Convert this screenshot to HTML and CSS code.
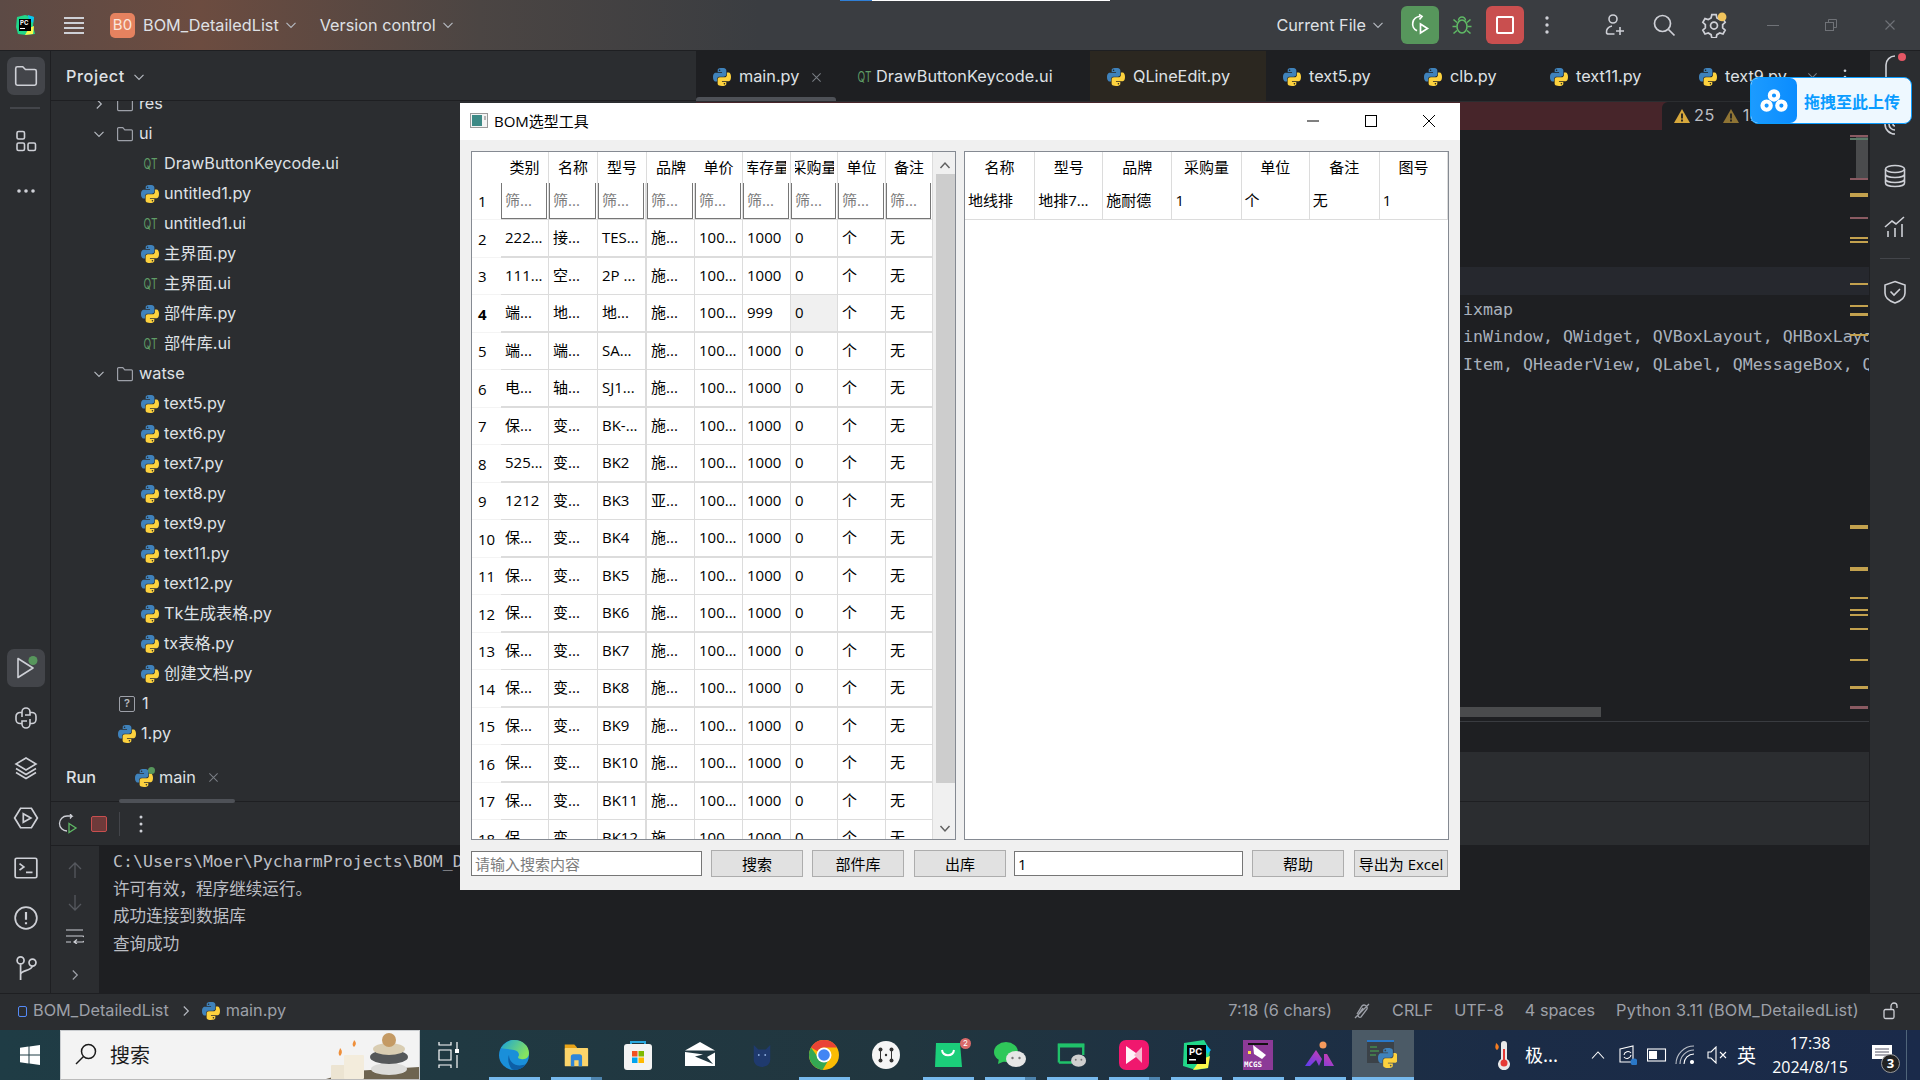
FILE: index.html
```html
<!DOCTYPE html>
<html lang="zh">
<head>
<meta charset="utf-8">
<title>BOM选型工具</title>
<link rel="stylesheet" href="styles.css">
</head>
<body>
<svg class="defs" width="0" height="0" aria-hidden="true">
  <symbol id="py" viewBox="0 0 110 110">
    <path fill="#3f82bb" d="M54.9 0C27 0 28.7 12 28.7 12v12.5h26.6v3.8H18S0 26.2 0 54.6s15.6 27.4 15.6 27.4h9.3V68.8s-.5-15.6 15.4-15.6h26.5s14.9.2 14.9-14.4V14.6S83.9 0 54.9 0zM40.2 8.5a4.8 4.8 0 1 1 0 9.6 4.8 4.8 0 0 1 0-9.6z"/>
    <path fill="#fdd23e" transform="rotate(180 55 55)" d="M54.9 0C27 0 28.7 12 28.7 12v12.5h26.6v3.8H18S0 26.2 0 54.6s15.6 27.4 15.6 27.4h9.3V68.8s-.5-15.6 15.4-15.6h26.5s14.9.2 14.9-14.4V14.6S83.9 0 54.9 0zM40.2 8.5a4.8 4.8 0 1 1 0 9.6 4.8 4.8 0 0 1 0-9.6z"/>
  </symbol>
  <symbol id="folder" viewBox="0 0 18 18">
    <path fill="none" stroke="currentColor" stroke-width="1.2" d="M1.6 3.6a1 1 0 0 1 1-1h4.2l2 2.2h6.6a1 1 0 0 1 1 1v8.8a1 1 0 0 1-1 1h-12.800a1 1 0 0 1-1-1z"/>
  </symbol>
  <symbol id="down" viewBox="0 0 12 12"><path fill="none" stroke="currentColor" stroke-width="1.2" d="M1.500 3.800 6 8.300l4.500-4.500"/></symbol>
  <symbol id="right" viewBox="0 0 12 12"><path fill="none" stroke="currentColor" stroke-width="1.2" d="M3.800 1.500 8.300 6l-4.500 4.500"/></symbol>
  <symbol id="x" viewBox="0 0 12 12"><path fill="none" stroke="currentColor" stroke-width="1.100" d="M1.500 1.500l9 9m0-9l-9 9"/></symbol>
</svg>

<div class="edge-top"></div>

<header class="titlebar">
  <svg class="pc-logo" viewBox="0 0 22 22" width="22" height="22"><path fill="#21d789" d="M3 3l8-2 9 2-1 9 2 8-9 1-8-1-2-7z"/><path fill="#fcf84a" d="M11 21l8-1 1-8-5 2z"/><path fill="#07c3f2" d="M14 1l6 2-1 6-4-3z"/><rect x="5" y="5" width="12" height="12" fill="#000"/><text x="6" y="11" class="pc-txt">PC</text><rect x="6" y="14" width="5" height="1" fill="#fff"/></svg>
  <svg class="hamb" viewBox="0 0 20 18" width="20" height="18"><path stroke="#ced0d6" stroke-width="2" d="M0 2h20M0 7h20M0 12h20M0 17h20"/></svg>
  <span class="badge">B0</span>
  <span class="tb-txt">BOM_DetailedList</span>
  <svg class="chev" width="12" height="12"><use href="#down"/></svg>
  <span class="tb-txt vc">Version control</span>
  <svg class="chev" width="12" height="12"><use href="#down"/></svg>
  <div class="tb-right">
    <span class="tb-txt cf">Current File</span>
    <svg class="chev" width="12" height="12"><use href="#down"/></svg>
    <span class="btn-run"><svg viewBox="0 0 24 24" width="24" height="24" fill="none" stroke="#fff" stroke-width="1.700"><path d="M12 3.500a7.500 7.500 0 0 0-3 14.300"/><path d="M11 1.500l3 2-2.500 3"/><path d="M12.500 11l7 4.500-7 4.500z"/></svg></span>
    <svg class="bug" viewBox="0 0 24 24" width="24" height="24" fill="none" stroke="#5fb865" stroke-width="1.600"><ellipse cx="12" cy="13.500" rx="5" ry="6.500"/><path d="M8.500 7.500a3.500 3.500 0 0 1 7 0M2.500 13.500h4M17.500 13.500h4M3.500 6.500l3.500 3M20.500 6.500l-3.500 3M3.500 20.500l3.500-3M20.500 20.500l-3.500-3"/></svg>
    <span class="btn-stop"><i></i></span>
    <svg class="vdots" viewBox="0 0 4 18" width="4" height="18"><circle cx="2" cy="2" r="1.700" fill="#ced0d6"/><circle cx="2" cy="9" r="1.700" fill="#ced0d6"/><circle cx="2" cy="16" r="1.700" fill="#ced0d6"/></svg>
    <svg class="ti ti-user" viewBox="0 0 24 24" width="24" height="24" fill="none" stroke="#ced0d6" stroke-width="1.600"><circle cx="11" cy="6" r="4"/><path d="M10 13c-4 .5-6 4-5.500 6.500 0 1 1 1.500 2 1.500h6M18 14v8M14 18h8"/></svg>
    <svg class="ti ti-search" viewBox="0 0 24 24" width="24" height="24" fill="none" stroke="#ced0d6" stroke-width="1.700"><circle cx="10.500" cy="10.500" r="8"/><path d="M16.500 16.500l6 6"/></svg>
    <svg class="ti ti-gear" viewBox="0 0 24 24" width="26" height="26" fill="none" stroke="#ced0d6" stroke-width="1.600"><path d="M10 2.500h4l.7 3 2.600 1.500 3-.9 2 3.500-2.300 2.100v3l2.300 2.100-2 3.500-3-.9-2.600 1.500-.7 3h-4l-.7-3-2.600-1.500-3 .9-2-3.500 2.300-2.100v-3L1.700 9.600l2-3.500 3 .9 2.600-1.500z"/><circle cx="12" cy="12.500" r="3.200"/><circle cx="19.500" cy="4.500" r="4" fill="#f2c55c" stroke="none"/></svg>
    <span class="wc wc-min"></span>
    <svg class="wc-max" viewBox="0 0 14 14" width="14" height="14" fill="none" stroke="#6f7277"><rect x="1.500" y="4.500" width="8" height="8"/><path d="M4.500 4.500v-3h8v8h-3"/></svg>
    <svg class="wc-x" width="12" height="12"><use href="#x"/></svg>
  </div>
</header>

<main class="ide">
  <nav class="stripe stripe-l">
    <span class="si act si-first"><svg viewBox="0 0 24 24" width="26" height="26" fill="none" stroke="#ced0d6" stroke-width="1.500"><path d="M2.500 5a1.500 1.500 0 0 1 1.500-1.500h5l2.500 2.500H20A1.500 1.500 0 0 1 21.500 7.500V19A1.500 1.500 0 0 1 20 20.500H4A1.500 1.500 0 0 1 2.500 19z"/></svg></span>
    <i class="sep"></i>
    <span class="si"><svg viewBox="0 0 24 24" width="24" height="24" fill="none" stroke="#ced0d6" stroke-width="1.600"><rect x="3" y="2.500" width="7.500" height="7.500" rx="1.500"/><rect x="3" y="14" width="7.500" height="7.500" rx="1.500"/><rect x="14" y="14" width="7.500" height="7.500" rx="1.500"/></svg></span>
    <span class="si si-g"><svg viewBox="0 0 24 8" width="24" height="8"><circle cx="5" cy="4" r="1.800" fill="#ced0d6"/><circle cx="12" cy="4" r="1.800" fill="#ced0d6"/><circle cx="19" cy="4" r="1.800" fill="#ced0d6"/></svg></span>
    <span class="grow"></span>
    <span class="si act"><svg viewBox="0 0 26 26" width="26" height="26" fill="none" stroke="#ced0d6" stroke-width="1.600"><path d="M5 3.500l15 9.500-15 9.500z" stroke-linejoin="round"/><circle cx="20" cy="5.500" r="4.500" fill="#57965c" stroke="none"/></svg></span>
    <span class="si si-g"><svg viewBox="0 0 24 24" width="24" height="24" fill="none" stroke="#ced0d6" stroke-width="1.600"><path d="M8 11V6a4 4 0 0 1 4-4 4 4 0 0 1 4 4v3h-5M16 13v5a4 4 0 0 1-4 4 4 4 0 0 1-4-4v-3h5"/><path d="M8 6.500H6a4 4 0 0 0-4 4v3a4 4 0 0 0 4 4h2M16 17.500h2a4 4 0 0 0 4-4v-3a4 4 0 0 0-4-4h-2"/></svg></span>
    <span class="si si-g"><svg viewBox="0 0 24 24" width="24" height="24" fill="none" stroke="#ced0d6" stroke-width="1.600"><path d="M12 2l10 6-10 6L2 8zM2 12.500l10 6 10-6M2 16.500l10 6 10-6"/></svg></span>
    <span class="si si-g"><svg viewBox="0 0 24 24" width="26" height="26" fill="none" stroke="#ced0d6" stroke-width="1.600"><path d="M7 3h10l5.500 9-5.500 9H7l-5.500-9z"/><path d="M9.500 8l7 4-7 4z"/></svg></span>
    <span class="si si-g"><svg viewBox="0 0 24 24" width="26" height="26" fill="none" stroke="#ced0d6" stroke-width="1.600"><rect x="2" y="3" width="20" height="18" rx="1.500"/><path d="M6 8l4 3-4 3M12 16h6"/></svg></span>
    <span class="si si-g"><svg viewBox="0 0 24 24" width="26" height="26" fill="none" stroke="#ced0d6" stroke-width="1.600"><circle cx="12" cy="12" r="10"/><path d="M12 6.500v7M12 16v1.800" stroke-width="2"/></svg></span>
    <span class="si si-g si-last"><svg viewBox="0 0 24 24" width="26" height="26" fill="none" stroke="#ced0d6" stroke-width="1.600"><circle cx="7" cy="5" r="3.200"/><circle cx="18" cy="7" r="3.200"/><path d="M7 8.500V23M7 18c0-4 10-3 11-8"/></svg></span>
  </nav>

  <div class="center">
    <div class="top">
      <section class="project">
        <div class="proj-head"><span class="proj-title">Project</span><svg class="chev" width="12" height="12"><use href="#down"/></svg></div>
        <div class="tree">
          <div class="row lv1"><svg class="tw" width="12" height="12"><use href="#right"/></svg><svg class="fd" width="18" height="18"><use href="#folder"/></svg><span>res</span></div>
          <div class="row lv1"><svg class="tw" width="12" height="12"><use href="#down"/></svg><svg class="fd" width="18" height="18"><use href="#folder"/></svg><span>ui</span></div>
          <div class="row lv2"><span class="qt">QT</span><span>DrawButtonKeycode.ui</span></div>
          <div class="row lv2"><svg class="pi" width="18" height="18"><use href="#py"/></svg><span>untitled1.py</span></div>
          <div class="row lv2"><span class="qt">QT</span><span>untitled1.ui</span></div>
          <div class="row lv2"><svg class="pi" width="18" height="18"><use href="#py"/></svg><span>主界面.py</span></div>
          <div class="row lv2"><span class="qt">QT</span><span>主界面.ui</span></div>
          <div class="row lv2"><svg class="pi" width="18" height="18"><use href="#py"/></svg><span>部件库.py</span></div>
          <div class="row lv2"><span class="qt">QT</span><span>部件库.ui</span></div>
          <div class="row lv1"><svg class="tw" width="12" height="12"><use href="#down"/></svg><svg class="fd" width="18" height="18"><use href="#folder"/></svg><span>watse</span></div>
          <div class="row lv2"><svg class="pi" width="18" height="18"><use href="#py"/></svg><span>text5.py</span></div>
          <div class="row lv2"><svg class="pi" width="18" height="18"><use href="#py"/></svg><span>text6.py</span></div>
          <div class="row lv2"><svg class="pi" width="18" height="18"><use href="#py"/></svg><span>text7.py</span></div>
          <div class="row lv2"><svg class="pi" width="18" height="18"><use href="#py"/></svg><span>text8.py</span></div>
          <div class="row lv2"><svg class="pi" width="18" height="18"><use href="#py"/></svg><span>text9.py</span></div>
          <div class="row lv2"><svg class="pi" width="18" height="18"><use href="#py"/></svg><span>text11.py</span></div>
          <div class="row lv2"><svg class="pi" width="18" height="18"><use href="#py"/></svg><span>text12.py</span></div>
          <div class="row lv2"><svg class="pi" width="18" height="18"><use href="#py"/></svg><span>Tk生成表格.py</span></div>
          <div class="row lv2"><svg class="pi" width="18" height="18"><use href="#py"/></svg><span>tx表格.py</span></div>
          <div class="row lv2"><svg class="pi" width="18" height="18"><use href="#py"/></svg><span>创建文档.py</span></div>
          <div class="row lv1f"><span class="unk">?</span><span>1</span></div>
          <div class="row lv1f"><svg class="pi" width="18" height="18"><use href="#py"/></svg><span>1.py</span></div>
        </div>
      </section>

      <section class="editor">
        <div class="tabs">
          <div class="tab t1"><svg width="18" height="18"><use href="#py"/></svg><span>main.py</span><svg class="tx" width="11" height="11"><use href="#x"/></svg></div>
          <div class="tab t2"><span class="qt">QT</span><span>DrawButtonKeycode.ui</span></div>
          <div class="tab t3"><svg width="18" height="18"><use href="#py"/></svg><span>QLineEdit.py</span></div>
          <div class="tab t4"><svg width="18" height="18"><use href="#py"/></svg><span>text5.py</span></div>
          <div class="tab t5"><svg width="18" height="18"><use href="#py"/></svg><span>clb.py</span></div>
          <div class="tab t6"><svg width="18" height="18"><use href="#py"/></svg><span>text11.py</span></div>
          <div class="tab t7"><svg width="18" height="18"><use href="#py"/></svg><span>text9.py</span><svg class="tx tx9" width="11" height="11"><use href="#x"/></svg><svg class="vd9" viewBox="0 0 4 18" width="4" height="16"><circle cx="2" cy="2" r="1.500" fill="#ced0d6"/><circle cx="2" cy="9" r="1.500" fill="#ced0d6"/><circle cx="2" cy="16" r="1.500" fill="#ced0d6"/></svg></div>
        </div>
        <div class="banner">
          <div class="insp">
            <svg class="warn" viewBox="0 0 16 14" width="16" height="14"><path fill="#d7a83c" d="M8 0l8 14H0z"/><path stroke="#1e1f22" stroke-width="1.800" d="M8 4.500v5M8 10.500v2"/></svg><span>25</span>
            <svg class="warn w2" viewBox="0 0 16 14" width="16" height="14"><path fill="#8f7434" d="M8 0l8 14H0z"/><path stroke="#1e1f22" stroke-width="1.800" d="M8 4.500v5M8 10.500v2"/></svg><span>123</span>
          </div>
        </div>
        <div class="code">
          <div class="caret"></div>
          <div class="line">ixmap</div>
          <div class="line">inWindow, QWidget, QVBoxLayout, QHBoxLayo</div>
          <div class="line">Item, QHeaderView, QLabel, QMessageBox, Q</div>
        </div>
        <div class="hbar"><i></i></div>
        <div class="foot"></div>
        <svg class="marks" viewBox="0 0 18 701" width="18" height="701">
          <rect x="6" y="84" width="12" height="43" fill="#4a4b4d"/>
          <g fill="#8a5a62"><rect y="84" width="18" height="2"/><rect y="127" width="18" height="2"/><rect y="166" width="18" height="2"/><rect y="655" width="18" height="3"/></g>
          <rect y="87" width="18" height="2" fill="#5b7a68"/>
          <g fill="#c3a14e"><rect y="142" width="18" height="4"/><rect y="186" width="18" height="2"/><rect y="190" width="18" height="2"/><rect y="232" width="18" height="2"/><rect y="254" width="18" height="2"/><rect y="262" width="18" height="3"/><rect y="283" width="18" height="2"/><rect y="474" width="18" height="4"/><rect y="516" width="18" height="4"/><rect y="546" width="18" height="2"/><rect y="558" width="18" height="2"/><rect y="563" width="18" height="2"/><rect y="577" width="18" height="2"/><rect y="608" width="18" height="2"/><rect y="635" width="18" height="3"/></g>
        </svg>
      </section>
    </div>

    <section class="run">
      <div class="run-tabs">
        <span class="run-title">Run</span>
        <span class="run-tab"><span class="py-dot"><svg width="18" height="18"><use href="#py"/></svg></span><span>main</span><svg class="tx" width="11" height="11"><use href="#x"/></svg></span>
      </div>
      <div class="run-tools">
        <svg viewBox="0 0 20 20" width="20" height="20" fill="none" stroke="#ced0d6" stroke-width="1.300"><path d="M9 2a7.500 7.500 0 0 0 0 15"/><path d="M9 2h5l-2-2M14 2l-2 2.500"/><path d="M11 9.500l7 4.500-7 4.500z" stroke="#5fb865"/></svg>
        <span class="stop"></span>
        <i class="tsep"></i>
        <svg class="tdots" viewBox="0 0 4 18" width="4" height="18"><circle cx="2" cy="2" r="1.500" fill="#ced0d6"/><circle cx="2" cy="9" r="1.500" fill="#ced0d6"/><circle cx="2" cy="16" r="1.500" fill="#ced0d6"/></svg>
      </div>
      <div class="run-body">
        <div class="gutter">
          <svg viewBox="0 0 14 16" width="14" height="16" fill="none" stroke="#55585e" stroke-width="1.300"><path d="M7 16V1M1 7l6-6 6 6"/></svg>
          <svg viewBox="0 0 14 16" width="14" height="16" fill="none" stroke="#55585e" stroke-width="1.300"><path d="M7 0v15M1 9l6 6 6-6"/></svg>
          <svg viewBox="0 0 18 16" width="18" height="16" fill="none" stroke="#ced0d6" stroke-width="1.200"><path d="M0 2h17M0 8h16a2.500 2.500 0 0 1 0 6H8M11 11.500L8 14l3 2M0 14h5"/></svg>
          <svg class="gut-chev" width="12" height="12"><use href="#right"/></svg>
        </div>
        <div class="console">
          <div>C:\Users\Moer\PycharmProjects\BOM_D</div>
          <div>许可有效，程序继续运行。</div>
          <div>成功连接到数据库</div>
          <div>查询成功</div>
        </div>
      </div>
    </section>
  </div>

  <nav class="stripe stripe-r">
    <span class="ri ri-bell"><svg viewBox="0 0 26 26" width="26" height="26" fill="none" stroke="#ced0d6" stroke-width="1.600"><path d="M4 24V12a9 9 0 0 1 9-9"/><circle cx="20" cy="4" r="4" fill="#e55765" stroke="none"/></svg></span>
    <span class="ri ri-spiral"><svg viewBox="0 0 24 24" width="24" height="24" fill="none" stroke="#ced0d6" stroke-width="1.600"><path d="M12 13a2 2 0 1 1 2-2M12 17a6 6 0 1 1 6-6M12 21a10 10 0 1 1 10-10"/></svg></span>
    <span class="ri"><svg viewBox="0 0 24 24" width="24" height="24" fill="none" stroke="#ced0d6" stroke-width="1.600"><ellipse cx="12" cy="5" rx="9.500" ry="3.500"/><path d="M2.500 5v14c0 2 4 3.500 9.500 3.500s9.500-1.500 9.500-3.500V5M2.500 10c0 2 4 3.500 9.500 3.500s9.500-1.500 9.500-3.500M2.500 15c0 2 4 3.500 9.500 3.500s9.500-1.500 9.500-3.500"/></svg></span>
    <span class="ri"><svg viewBox="0 0 24 24" width="24" height="24" fill="none" stroke="#ced0d6" stroke-width="1.600"><path d="M2 12L9 6l4 3 8-7M5 22v-6M12 22v-9M19 22V9"/></svg></span>
    <i class="sep-r"></i>
    <span class="ri"><svg viewBox="0 0 24 24" width="24" height="24" fill="none" stroke="#ced0d6" stroke-width="1.600"><path d="M12 1.500l10 3.500v8c0 5-4 8-10 10C6 21 2 18 2 13V5z"/><path d="M7.500 11.500l3.500 3.500 6-6"/></svg></span>
  </nav>
</main>

<footer class="status">
  <i class="mod"></i><span>BOM_DetailedList</span>
  <svg class="st-chev" width="12" height="12"><use href="#right"/></svg>
  <svg class="st-py" width="18" height="18"><use href="#py"/></svg><span>main.py</span>
  <div class="st-right">
    <span>7:18 (6 chars)</span>
    <svg class="st-nopen" viewBox="0 0 18 18" width="18" height="18" fill="none" stroke="#9da0a8" stroke-width="1.300"><path d="M4 12l5-8a3 3 0 0 1 5 3l-6 8a2 2 0 0 1-3-2l5-7M2 16L16 2"/></svg>
    <span>CRLF</span><span>UTF-8</span><span>4 spaces</span><span class="st-py-ver">Python 3.11 (BOM_DetailedList)</span>
    <svg class="st-lock" viewBox="0 0 18 18" width="18" height="18" fill="none" stroke="#ced0d6" stroke-width="1.300"><rect x="2" y="7.500" width="10" height="9" rx="1.500"/><path d="M9 7.500V4a3 3 0 0 1 6 0v2"/></svg>
  </div>
</footer>

<div class="taskbar">
  <div class="start"><svg viewBox="0 0 20 20" width="20" height="20" fill="#fff"><path d="M0 2.800l8.500-1.200v7.900H0zM9.500 1.400L20 0v9.500H9.500zM0 10.500h8.500v7.900L0 17.200zM9.500 10.500H20V20L9.500 18.600z"/></svg></div>
  <div class="search">
    <svg viewBox="0 0 22 22" width="22" height="22" fill="none" stroke="#1a1a1a" stroke-width="1.500"><circle cx="13.500" cy="8.500" r="7"/><path d="M8.500 13.500L1 21"/></svg>
    <span>搜索</span>
    <svg class="stones" viewBox="0 0 120 50" width="120" height="50">
      <path fill="#6e6450" d="M20 50l35-10 65-4v14z"/>
      <rect x="32" y="34" width="20" height="15" rx="1" fill="#ece4d2"/>
      <rect x="45" y="24" width="20" height="24" rx="1" fill="#f3ecdc"/>
      <path fill="#ef8f3a" d="M41 25c-3-3 0-6 0-8 2 2 3 5 0 8zM55 16c-3-3 0-5 0-7 2 2 3 4 0 7z"/>
      <ellipse cx="90" cy="38" rx="18" ry="6" fill="#dcdcda"/>
      <ellipse cx="90" cy="26" rx="19" ry="7" fill="#55585a"/>
      <ellipse cx="90" cy="18" rx="16" ry="6" fill="#d9cdb2"/>
      <ellipse cx="90" cy="9" rx="7" ry="7" fill="#c49a64"/>
    </svg>
  </div>
  <div class="tv"><svg viewBox="0 0 24 26" width="24" height="26" fill="none" stroke="#fff" stroke-width="1.200"><path d="M1 0v3h12V0M1 8h12v10H1zM1 26v-3h12v3M19 0v7M19 13v13"/><rect x="17" y="7" width="4" height="4" fill="#fff" stroke="none"/></svg></div>
  <div class="ti-app on"><svg viewBox="0 0 30 30" width="30" height="30"><defs><linearGradient id="eg" x1="0" y1="0" x2="1" y2="0.500"><stop offset="0" stop-color="#1aa3d8"/><stop offset="1" stop-color="#86e35f"/></linearGradient></defs><circle cx="15" cy="15" r="15" fill="#1a8fd9"/><path fill="url(#eg)" d="M2 8C6 2 11 0 15 0c9 0 15 6 15 13 0 4-3 7-8 6-2 0-3-1-3-2 2-2 1-6-4-7C10 9 5 9 2 8z"/><path fill="#0d5fa6" d="M10 15c0 8 8 13 17 9-3 4-7 6-12 6-2 0-4-3-5-6s-1-7 0-9z"/></svg></div>
  <div class="ti-app on two"><svg viewBox="0 0 30 30" width="30" height="26"><path fill="#e8a317" d="M2 3h11l3 3v3H2z"/><rect x="2" y="7" width="27" height="21" rx="1" fill="#fbd46a"/><path fill="#2f86d8" d="M9 28V17a3 3 0 0 1 3-3h7a3 3 0 0 1 3 3v11h-4v-7h-5v7z"/></svg></div>
  <div class="ti-app"><svg viewBox="0 0 30 30" width="30" height="30"><path fill="none" stroke="#2aa9e0" stroke-width="2" d="M8 7V2h14v5"/><rect x="1" y="4" width="28" height="26" rx="3" fill="#f3f3f3"/><rect x="9" y="11" width="5.500" height="5.500" fill="#f25022"/><rect x="15.500" y="11" width="5.500" height="5.500" fill="#7fba00"/><rect x="9" y="17.500" width="5.500" height="5.500" fill="#00a4ef"/><rect x="15.500" y="17.500" width="5.500" height="5.500" fill="#ffb900"/></svg></div>
  <div class="ti-app"><svg viewBox="0 0 30 26" width="30" height="26"><path fill="#fff" d="M15 0l15 8.500H0zM0 10l15 2 3 .5-8 2 18 7.500L22 15l8-4.500V24H0z"/></svg></div>
  <div class="ti-app"><svg viewBox="0 0 24 26" width="22" height="24"><path fill="#1f3a6e" d="M3 2l5 5h8l5-5v16c0 5-4 8-9 8s-9-3-9-8z"/><circle cx="8.500" cy="13" r="1" fill="#8fb0e0"/><circle cx="15.500" cy="13" r="1" fill="#8fb0e0"/></svg></div>
  <div class="ti-app on"><svg viewBox="0 0 30 30" width="30" height="30"><circle cx="15" cy="15" r="15" fill="#fbbc04"/><path fill="#ea4335" d="M2 7.500A15 15 0 0 1 28 7.500H15a7.500 7.500 0 0 0-6.500 3.750z"/><path fill="#34a853" d="M2 7.500A15 15 0 0 0 13.500 29.900L19.500 20H11z"/><circle cx="15" cy="15" r="7.500" fill="#fff"/><circle cx="15" cy="15" r="5.800" fill="#4285f4"/></svg></div>
  <div class="ti-app"><svg viewBox="0 0 28 28" width="28" height="28"><circle cx="14" cy="14" r="14" fill="#f5f5f5"/><g fill="#333"><circle cx="8.500" cy="8.500" r="2"/><circle cx="19.500" cy="8.500" r="2"/><circle cx="8.500" cy="19.500" r="2"/><circle cx="19.500" cy="19.500" r="2"/><path d="M8 9h1v10H8zM19 9h1v10h-1z"/><circle cx="14" cy="14" r="1.200"/></g></svg></div>
  <div class="ti-app on"><span class="numbadge">2</span><svg viewBox="0 0 30 30" width="30" height="30"><path fill="#1bce7a" d="M3 3h24l2 24H2z"/><path fill="none" stroke="#fff" stroke-width="2" d="M9 10c1 7 11 7 12 0"/></svg></div>
  <div class="ti-app on two"><svg viewBox="0 0 32 30" width="32" height="30"><ellipse cx="12" cy="12" rx="12" ry="10" fill="#2fc85a"/><path fill="#2fc85a" d="M5 18l-1 6 7-3z"/><ellipse cx="22" cy="19" rx="10" ry="8" fill="#e6e6e6"/><circle cx="18.500" cy="18" r="1.200" fill="#777"/><circle cx="25.500" cy="18" r="1.200" fill="#777"/></svg></div>
  <div class="ti-app on"><svg viewBox="0 0 32 26" width="30" height="26"><path fill="none" stroke="#20c26a" stroke-width="2.500" d="M2 21V2h26v11M2 21h14"/><rect x="1" y="1" width="28" height="4" fill="#20c26a"/><ellipse cx="23" cy="19" rx="8" ry="6.500" fill="#cfcfcf"/><circle cx="20" cy="18" r="1" fill="#777"/><circle cx="26" cy="18" r="1" fill="#777"/></svg></div>
  <div class="ti-app on two"><svg viewBox="0 0 30 30" width="30" height="30"><rect width="30" height="30" rx="7" fill="#f0186e"/><path fill="#fff" d="M7 6l10 7 6 2-6 2-10 7z" opacity=".95"/><path fill="#f6b5cd" d="M23 7v16l-8-8z"/></svg></div>
  <div class="ti-app on"><svg viewBox="0 0 30 30" width="30" height="30"><path fill="#21d789" d="M3 3l20-3 6 10-2 18-12 2-13-4z"/><path fill="#fcf84a" d="M12 30l15-2 2-12-10 4z"/><path fill="#07c3f2" d="M24 4l6 6-4 4z"/><rect x="6" y="5" width="19" height="19" fill="#000"/><text x="8" y="15" class="pc-big">PC</text><rect x="8" y="19" width="7" height="1.500" fill="#fff"/></svg></div>
  <div class="ti-app on"><svg viewBox="0 0 30 30" width="30" height="30"><rect width="30" height="30" fill="#8c3a97"/><path fill="#fff" d="M10 5l13 10-4 4-8-5z"/><path fill="#111" d="M5 3h20v2H5z"/><path fill="#ffe24a" d="M5 11h3v3H5z"/><text x="1" y="27" class="mcgs">MCGS</text></svg></div>
  <div class="ti-app on"><svg viewBox="0 0 30 30" width="30" height="30"><defs><linearGradient id="ag" x1="0" y1="1" x2="1" y2="0"><stop offset="0" stop-color="#5b3cf0"/><stop offset="1" stop-color="#e83fa0"/></linearGradient></defs><path fill="url(#ag)" d="M0 26L11 10l6 9-3 7-3-6-6 6zM19 14h3l7 12h-10z"/><circle cx="18" cy="5" r="3.500" fill="#f59a5c"/></svg></div>
  <div class="ti-app active"><svg viewBox="0 0 30 30" width="30" height="30"><rect y="1" width="27" height="23" fill="#3b4248"/><rect y="1" width="27" height="2" fill="#2a78c8"/><path stroke="#4caf50" d="M3 8h7M3 12h9M3 16h6"/><svg x="11" y="9" width="20" height="20"><use href="#py"/></svg></svg></div>
  <div class="tray">
    <svg class="th" viewBox="0 0 18 30" width="18" height="30"><path fill="#e9e9e9" d="M10 1a3 3 0 0 1 3 3v15a6 6 0 1 1-6 0V4a3 3 0 0 1 3-3z"/><circle cx="10" cy="23" r="3.500" fill="#e53935"/><rect x="9" y="9" width="2" height="13" fill="#e53935"/><path fill="#f57c20" d="M3 10C0 8 2 5 2 3c3 2 4 5 1 7z"/></svg>
    <span class="ji">极...</span>
    <svg class="caret-up" viewBox="0 0 14 8" width="14" height="8" fill="none" stroke="#fff" stroke-width="1.100"><path d="M1 7.500L7 1l6 6.500"/></svg>
    <svg class="tr1" viewBox="0 0 18 20" width="18" height="20" fill="none" stroke="#fff" stroke-width="1.100"><path d="M1 4l13-3v16H1zM5 10a4 4 0 0 1 7-2M12 10a4 4 0 0 1-7 2"/><circle cx="15" cy="17" r="3.500" fill="#2a78c8" stroke="none"/></svg>
    <svg class="tr2" viewBox="0 0 20 14" width="20" height="14" fill="none" stroke="#fff" stroke-width="1.100"><rect x=".5" y="1" width="18" height="12"/><rect x="2" y="3" width="8" height="8" fill="#fff" stroke="none"/></svg>
    <svg class="tr3" viewBox="0 0 20 20" width="20" height="20" fill="none" stroke="#fff" stroke-width="1.100"><path d="M1 19A18 18 0 0 1 19 1M5 19A14 14 0 0 1 19 5" opacity=".7"/><path d="M9 19A10 10 0 0 1 19 9"/><circle cx="17" cy="17" r="1.500" fill="#fff"/></svg>
    <svg class="tr4" viewBox="0 0 20 18" width="20" height="18" fill="none" stroke="#fff" stroke-width="1.100"><path d="M1 6h3l5-5v16l-5-5H1zM13 6l6 6m0-6l-6 6"/></svg>
    <span class="ying">英</span>
    <div class="clock"><span>17:38</span><span>2024/8/15</span></div>
    <div class="notif"><svg viewBox="0 0 20 20" width="20" height="20"><path fill="#fff" d="M0 0h20v14h-6l-4 5v-5H0z"/><path stroke="#556" d="M3 4h14M3 7h14M3 10h14"/></svg><span class="nb">3</span></div>
    <i class="desk"></i>
  </div>
</div>

<!-- Floating application window over the IDE -->
<section class="dialog">
  <div class="dlg-title">
    <svg viewBox="0 0 18 15" width="18" height="15"><rect x=".5" y=".5" width="17" height="14" fill="#f4f4f4" stroke="#9a9a9a"/><rect x="2" y="2" width="10" height="11" fill="#3d8a86"/><rect x="14.500" y="3" width="1" height="4" fill="#777"/></svg>
    <span>BOM选型工具</span>
    <div class="dlg-ctl">
      <svg viewBox="0 0 14 14" width="14" height="14"><path stroke="#000" d="M1 7h12"/></svg>
      <svg viewBox="0 0 14 14" width="14" height="14"><rect x="1.500" y="1.500" width="11" height="11" fill="none" stroke="#000"/></svg>
      <svg viewBox="0 0 14 14" width="14" height="14"><path stroke="#000" fill="none" d="M1 1l12 12m0-12L1 13"/></svg>
    </div>
  </div>
  <div class="dlg-body">
    <div class="panes">
      <div class="pane">
        <table class="grid g-left">
          <thead><tr><th></th><th>类别</th><th>名称</th><th>型号</th><th>品牌</th><th>单价</th><th><span class="clip">库存量</span></th><th><span class="clip">采购量</span></th><th>单位</th><th>备注</th></tr></thead>
          <tbody>
            <tr class="filt"><td class="rn">1</td><td><input placeholder="筛..."></td><td><input placeholder="筛..."></td><td><input placeholder="筛..."></td><td><input placeholder="筛..."></td><td><input placeholder="筛..."></td><td><input placeholder="筛..."></td><td><input placeholder="筛..."></td><td><input placeholder="筛..."></td><td><input placeholder="筛..."></td></tr>
            <tr><td class="rn">2</td><td>222...</td><td>接...</td><td>TES...</td><td>施...</td><td>100...</td><td>1000</td><td>0</td><td>个</td><td>无</td></tr>
            <tr><td class="rn">3</td><td>111...</td><td>空...</td><td>2P ...</td><td>施...</td><td>100...</td><td>1000</td><td>0</td><td>个</td><td>无</td></tr>
            <tr><td class="rn cur">4</td><td>端...</td><td>地...</td><td>地...</td><td>施...</td><td>100...</td><td>999</td><td class="sel">0</td><td>个</td><td>无</td></tr>
            <tr><td class="rn">5</td><td>端...</td><td>端...</td><td>SA...</td><td>施...</td><td>100...</td><td>1000</td><td>0</td><td>个</td><td>无</td></tr>
            <tr><td class="rn">6</td><td>电...</td><td>轴...</td><td>SJ1...</td><td>施...</td><td>100...</td><td>1000</td><td>0</td><td>个</td><td>无</td></tr>
            <tr><td class="rn">7</td><td>保...</td><td>变...</td><td>BK-...</td><td>施...</td><td>100...</td><td>1000</td><td>0</td><td>个</td><td>无</td></tr>
            <tr><td class="rn">8</td><td>525...</td><td>变...</td><td>BK2</td><td>施...</td><td>100...</td><td>1000</td><td>0</td><td>个</td><td>无</td></tr>
            <tr><td class="rn">9</td><td>1212</td><td>变...</td><td>BK3</td><td>亚...</td><td>100...</td><td>1000</td><td>0</td><td>个</td><td>无</td></tr>
            <tr><td class="rn">10</td><td>保...</td><td>变...</td><td>BK4</td><td>施...</td><td>100...</td><td>1000</td><td>0</td><td>个</td><td>无</td></tr>
            <tr><td class="rn">11</td><td>保...</td><td>变...</td><td>BK5</td><td>施...</td><td>100...</td><td>1000</td><td>0</td><td>个</td><td>无</td></tr>
            <tr><td class="rn">12</td><td>保...</td><td>变...</td><td>BK6</td><td>施...</td><td>100...</td><td>1000</td><td>0</td><td>个</td><td>无</td></tr>
            <tr><td class="rn">13</td><td>保...</td><td>变...</td><td>BK7</td><td>施...</td><td>100...</td><td>1000</td><td>0</td><td>个</td><td>无</td></tr>
            <tr><td class="rn">14</td><td>保...</td><td>变...</td><td>BK8</td><td>施...</td><td>100...</td><td>1000</td><td>0</td><td>个</td><td>无</td></tr>
            <tr><td class="rn">15</td><td>保...</td><td>变...</td><td>BK9</td><td>施...</td><td>100...</td><td>1000</td><td>0</td><td>个</td><td>无</td></tr>
            <tr><td class="rn">16</td><td>保...</td><td>变...</td><td>BK10</td><td>施...</td><td>100...</td><td>1000</td><td>0</td><td>个</td><td>无</td></tr>
            <tr><td class="rn">17</td><td>保...</td><td>变...</td><td>BK11</td><td>施...</td><td>100...</td><td>1000</td><td>0</td><td>个</td><td>无</td></tr>
            <tr><td class="rn">18</td><td>保...</td><td>变...</td><td>BK12</td><td>施...</td><td>100...</td><td>1000</td><td>0</td><td>个</td><td>无</td></tr>
          </tbody>
        </table>
        <div class="vbar">
          <svg viewBox="0 0 12 8" width="12" height="8" fill="none" stroke="#606060" stroke-width="1.500"><path d="M1.500 7L6 2l4.500 5"/></svg>
          <i></i>
          <svg viewBox="0 0 12 8" width="12" height="8" fill="none" stroke="#606060" stroke-width="1.500"><path d="M1.500 1L6 6l4.500-5"/></svg>
        </div>
      </div>
      <div class="pane">
        <table class="grid g-right">
          <thead><tr><th>名称</th><th>型号</th><th>品牌</th><th>采购量</th><th>单位</th><th>备注</th><th>图号</th></tr></thead>
          <tbody><tr><td>地线排</td><td>地排7...</td><td>施耐德</td><td>1</td><td>个</td><td>无</td><td>1</td></tr></tbody>
        </table>
      </div>
    </div>
    <div class="ctrls">
      <input class="f f-search" placeholder="请输入搜索内容">
      <button>搜索</button>
      <button>部件库</button>
      <button>出库</button>
      <input class="f f-qty" value="1">
      <button>帮助</button>
      <button class="b-x">导出为 Excel</button>
    </div>
  </div>
</section>

<aside class="baidu">
  <span class="bd-ic"><svg viewBox="0 0 30 26" width="28" height="24" fill="none" stroke="#fff" stroke-width="4.500"><circle cx="15" cy="7" r="4.500"/><circle cx="7" cy="18" r="4.500"/><circle cx="23" cy="18" r="4.500"/></svg></span>
  <span class="bd-tx">拖拽至此上传</span>
</aside>
</body>
</html>
```

FILE: styles.css
```css
* { box-sizing: border-box; }
html, body { margin: 0; padding: 0; }
body {
  width: 1920px; height: 1080px; overflow: hidden; position: relative;
  display: flex; flex-direction: column;
  font: 16.25px/1.2 Inter, "Noto Sans CJK SC", sans-serif;
  color: #c9ccd3; background: #1e1f22;
}
.defs { position: absolute; }
.edge-top { position: absolute; left: 840px; top: 0; width: 270px; height: 1px; background: linear-gradient(90deg, #2f7fd6 32px, #fff 32px); z-index: 5; }

/* title bar */
.titlebar {
  height: 51px; flex: none; display: flex; align-items: center; padding-left: 14px;
  border-bottom: 1px solid #1e1f22;
  background: linear-gradient(90deg, #5c4a45 0, #6c4c40 200px, #4b4543 480px, #3a3d41 760px);
}
.pc-txt { font: bold 6px Inter, sans-serif; fill: #fff; }
.pc-big { font: bold 9.500px Inter, sans-serif; fill: #fff; }
.mcgs { font: bold 7.500px "DejaVu Sans Mono", monospace; fill: #fff; }
.hamb { margin-left: 28px; }
.badge { margin-left: 26px; width: 25px; height: 25px; border-radius: 5px; background: #e5825f; color: #fbe6dc; font-size: 15px; display: flex; align-items: center; justify-content: center; }
.tb-txt { margin-left: 8px; padding-top: 2px; color: #dfe1e5; }
.chev { margin-left: 6px; color: #b4b8bf; flex: none; }
.vc { margin-left: 23px; }
.tb-right { margin-left: auto; display: flex; align-items: center; height: 50px; }
.btn-run, .btn-stop { width: 38px; height: 38px; border-radius: 6px; display: flex; align-items: center; justify-content: center; }
.btn-run { margin-left: 17px; background: #57965c; }
.bug { margin-left: 11px; }
.btn-stop { margin-left: 12px; background: #c94f4f; }
.btn-stop i { width: 18px; height: 18px; border: 2px solid #fff; border-radius: 2px; }
.vdots { margin-left: 21px; }
.ti-user { margin-left: 53px; }
.ti-search { margin-left: 26px; }
.ti-gear { margin-left: 25px; }
.wc-min { margin-left: 40px; width: 12px; height: 1px; background: #6f7277; }
.wc-max { margin-left: 45px; }
.wc-x { margin-left: 46px; margin-right: 24px; color: #6f7277; }

/* IDE frame */
.ide { height: 942px; flex: none; display: flex; }
.stripe { width: 51px; flex: none; background: #2b2d30; display: flex; flex-direction: column; align-items: center; }
.stripe-l { border-right: 1px solid #1e1f22; }
.si { width: 38px; height: 38px; margin-left: 1px; flex: none; display: flex; align-items: center; justify-content: center; border-radius: 7px; }
.si-first { margin-top: 6px; }
.act { background: #43454a; }
.sep { width: 30px; height: 2px; margin-top: 12px; background: #43454a; }
.si + .sep + .si { margin-top: 13px; }
.si-g { margin-top: 12px; }
.si-last { margin-bottom: 6px; }
.grow { flex: 1; }
.center { flex: 1; min-width: 0; display: flex; flex-direction: column; }
.top { height: 701px; flex: none; display: flex; }

/* project tree */
.project { width: 645px; flex: none; background: #2b2d30; display: flex; flex-direction: column; }
.proj-head { height: 50px; flex: none; border-bottom: 1px solid #1e1f22; display: flex; align-items: center; padding: 2px 0 0 15px; }
.proj-title { color: #dfe1e5; font-weight: 500; letter-spacing: .6px; }
.proj-head .chev { margin-left: 8px; }
.tree { flex: 1; overflow: hidden; }
.row { height: 30px; display: flex; align-items: center; color: #dfe1e5; white-space: nowrap; }
.row:first-child { margin-top: -12px; }
.lv1 { padding-left: 42px; }
.tw { color: #b4b8bf; margin-right: 11px; flex: none; }
.fd { color: #9da0a8; margin-right: 5px; flex: none; }
.lv2 { padding-left: 90px; }
.lv1f { padding-left: 67px; }
.pi { margin-right: 5px; flex: none; }
.qt { width: 18px; margin-right: 5px; flex: none; color: #5f9c66; font-size: 14px; text-align: center; transform: scaleX(.72); }
.unk { width: 16px; height: 16px; margin: 0 7px 0 1px; border: 1.500px solid #9da0a8; border-radius: 2px; font-size: 11px; font-weight: 600; color: #b4b8bf; display: flex; align-items: center; justify-content: center; }

/* editor */
.editor { flex: 1; min-width: 0; position: relative; display: flex; flex-direction: column; background: #1e1f22; }
.tabs { height: 51px; flex: none; display: flex; border-bottom: 1px solid #2b2d30; }
.tab { height: 50px; flex: none; display: flex; align-items: center; padding: 2px 0 0 17px; color: #dfe1e5; position: relative; }
.tab svg { margin-right: 8px; flex: none; }
.tab .qt { margin-right: 3px; }
.t1 { width: 142px; }
.t1::after { content: ""; position: absolute; left: 0; right: 2px; bottom: 0; height: 4px; background: #4e5157; border-radius: 3px 3px 0 0; }
.t2 { width: 252px; }
.t2 .qt + span { letter-spacing: .1px; }
.t3 { width: 176px; background: #2b2720; }
.t4 { width: 141px; }
.t5 { width: 126px; }
.t6 { width: 149px; }
.t7 { flex: 1; }
.tx { color: #7a7e85; margin-left: 12px; }
.tab .tx { margin-right: 0; }
.tab .tx9 { margin-left: 20px; }
.tab .vd9 { margin: 0 0 0 25px; }
.banner { height: 28px; flex: none; background: #47252a; display: flex; justify-content: flex-end; }
.insp { width: 207px; background: #1e1f22; border-radius: 6px 0 0 0; display: flex; align-items: center; padding-left: 12px; color: #bcbec4; letter-spacing: .5px; }
.warn { margin-right: 4px; }
.w2 { margin-left: 8px; }
.code { flex: 1; overflow: hidden; font: 16.600px/27.300px "DejaVu Sans Mono", "Noto Sans CJK SC", monospace; color: #a9b1bc; }
.caret { height: 28px; margin-top: 137px; background: #26282e; }
.line { height: 27.300px; padding-left: 767px; white-space: pre; }
.caret + .line { margin-top: 1px; }
.hbar { height: 12px; flex: none; margin-bottom: 2px; }
.hbar i { display: block; width: 905px; height: 10px; background: linear-gradient(90deg, #2b2d30 0, #4a4b4d 30px); }
.foot { height: 31px; flex: none; border-top: 1px solid #393b40; }
.marks { position: absolute; right: 1px; top: 0; }

/* run */
.run { height: 241px; flex: none; background: #2b2d30; display: flex; flex-direction: column; }
.run-tabs { height: 50px; flex: none; display: flex; align-items: center; border-bottom: 1px solid #1e1f22; padding: 2px 0 0 15px; }
.run-title { font-weight: 500; color: #dfe1e5; width: 53px; }
.run-tab { width: 116px; height: 48px; display: flex; align-items: center; padding-left: 16px; color: #dfe1e5; position: relative; }
.run-tab::after { content: ""; position: absolute; left: 0; right: 0; bottom: -1px; height: 4px; background: #4e5157; border-radius: 2px; }
.py-dot { width: 18px; height: 18px; margin-right: 6px; position: relative; display: flex; }
.py-dot::after { content: ""; position: absolute; width: 7px; height: 7px; border-radius: 50%; background: #57965c; right: -2px; top: -2px; }
.run-tools { height: 44px; flex: none; display: flex; align-items: center; padding-left: 7px; border-bottom: 1px solid #1e1f22; }
.stop { width: 16px; height: 16px; margin-left: 13px; background: #6e3a3a; border: 1.500px solid #c94f4f; border-radius: 2px; }
.tsep { width: 1px; height: 24px; margin-left: 12px; background: #43454a; }
.tdots { margin-left: 19px; }
.run-body { flex: 1; min-height: 0; display: flex; }
.gutter { width: 48px; flex: none; display: flex; flex-direction: column; align-items: center; padding-top: 16px; gap: 17px; }
.gut-chev { color: #9da0a8; margin-top: 8px; }
.console { flex: 1; background: #1e1f22; padding: 2px 0 0 14px; font: 16.600px/27.500px "DejaVu Sans Mono", "Noto Sans CJK SC", monospace; color: #bcbec4; overflow: hidden; }
.console div { height: 27.500px; white-space: pre; }

/* right stripe */
.stripe-r { border-left: 1px solid #1e1f22; }
.ri { flex: none; display: flex; height: 24px; margin-top: 27px; }
.ri-bell { margin-top: 2px; height: 26px; }
.ri-spiral { margin-top: 34px; }
.sep-r { width: 30px; height: 1px; margin-top: 19px; background: #43454a; }
.sep-r + .ri { margin-top: 21px; }

/* status */
.status { height: 37px; flex: none; background: #2b2d30; border-top: 1px solid #1e1f22; display: flex; align-items: center; padding: 0 0 2px 18px; color: #9da0a8; white-space: nowrap; }
.mod { width: 9px; height: 11px; border: 1.500px solid #548af7; border-radius: 2px; margin-right: 6px; }
.st-chev { margin: 0 10px 0 11px; color: #b4b8bf; }
.st-py { margin-right: 6px; }
.st-right { margin-left: auto; display: flex; align-items: center; gap: 21px; padding-right: 20px; }
.st-py-ver { letter-spacing: .2px; }
.st-lock { margin-left: 2px; }

/* taskbar */
.taskbar { height: 50px; flex: none; display: flex; align-items: stretch; background: linear-gradient(90deg, #1f3c45 0, #21363f 900px, #1b2c46 1500px, #1a2a4a 100%); }
.start { width: 60px; flex: none; display: flex; align-items: center; justify-content: center; }
.search { width: 360px; flex: none; position: relative; background: #f3f3f3; border: 1px solid #c9cccf; border-bottom-color: #bbb; display: flex; align-items: center; padding: 0 0 2px 14px; color: #1a1a1a; font: 20px "Noto Sans CJK SC", sans-serif; overflow: hidden; }
.search span { margin-left: 13px; }
.stones { position: absolute; right: 0; top: 0; }
.tv { width: 63px; flex: none; display: flex; align-items: center; justify-content: center; padding-right: 3px; margin-right: 1px; }
.ti-app { width: 62px; flex: none; display: flex; align-items: center; justify-content: center; position: relative; }
.ti-app > svg { position: relative; left: -1px; }
.ti-app.on::after { content: ""; position: absolute; left: 5px; bottom: 0; width: 51px; height: 3px; background: #76b9ed; }
.ti-app.two::after { width: 51px; background: linear-gradient(90deg, #76b9ed 40px, #4d83ad 40px); }
.ti-app.active { background: #4b5a66; border-bottom: 3px solid #76b9ed; }
.numbadge { position: absolute; right: 9px; top: 8px; width: 11px; height: 11px; border-radius: 50%; background: #d96a6a; color: #fff; font-size: 8px; line-height: 11px; text-align: center; z-index: 1; }
.tray { flex: 1; display: flex; align-items: center; color: #fff; white-space: nowrap; font-family: "Noto Sans CJK SC", sans-serif; }
.th { margin-left: 80px; }
.ji { margin-left: 13px; font-size: 18px; }
.caret-up { margin-left: 33px; }
.tr1 { margin-left: 14px; }
.tr2 { margin-left: 10px; }
.tr3 { margin-left: 8px; }
.tr4 { margin-left: 12px; }
.ying { margin-left: 10px; font-size: 19px; }
.clock { margin-left: 13px; width: 82px; display: flex; flex-direction: column; align-items: center; font: 16px/24px "Open Sans", sans-serif; }
.notif { margin-left: 21px; position: relative; display: flex; }
.nb { position: absolute; right: -8px; bottom: -8px; width: 19px; height: 19px; border-radius: 50%; background: #222; border: 1px solid #999; color: #fff; font: bold 13px/17px "Open Sans", sans-serif; text-align: center; }
.desk { margin-left: 14px; width: 1px; height: 50px; background: #50657a; }

/* floating dialog */
.dialog { position: absolute; left: 460px; top: 103px; width: 1000px; height: 787px; background: #f0f0f0; display: flex; flex-direction: column; color: #000; font: 15px/1.2 "Open Sans", "Noto Sans CJK SC", sans-serif; z-index: 10; }
.dlg-title { height: 37px; flex: none; background: #fff; display: flex; align-items: center; padding: 0 0 2px 10px; }
.dlg-title span { margin-left: 6px; }
.dlg-ctl { margin-left: auto; display: flex; gap: 44px; padding-right: 24px; }
.dlg-body { flex: 1; min-height: 0; display: flex; flex-direction: column; padding: 11px 11px 13px; }
.panes { height: 689px; flex: none; display: flex; justify-content: space-between; }
.pane { width: 485px; height: 689px; flex: none; background: #fff; border: 1px solid #858a92; overflow: hidden; position: relative; display: flex; align-items: flex-start; }
.grid { border-collapse: separate; border-spacing: 0; table-layout: fixed; background: #fff; flex: none; }
.grid th { height: 31px; padding: 0 0 2px; font-weight: 400; text-align: center; border-right: 1px solid #dcdcdc; white-space: nowrap; overflow: hidden; }
.grid td { padding: 0 0 2px 4px; border-right: 1px solid #dcdcdc; border-bottom: 1px solid #dcdcdc; height: 37px; white-space: nowrap; overflow: hidden; }
.clip { display: flex; justify-content: center; width: 39px; margin: 0 auto; overflow: hidden; }
.g-left { width: 461px; }
.g-left th:nth-child(1), .g-left td:nth-child(1) { width: 29px; }
.g-left th:nth-child(1) { border-right: 0; }
.g-left th:nth-child(2) { width: 48px; }
.g-left th:nth-child(3), .g-left th:nth-child(4) { width: 49px; }
.g-left th:nth-child(5), .g-left th:nth-child(6), .g-left th:nth-child(7), .g-left th:nth-child(9) { width: 48px; }
.g-left th:nth-child(8), .g-left th:nth-child(10) { width: 47px; }
.g-left th:nth-child(5) { border-right: 0; }
.g-left td:nth-child(4) { border-right-width: 2px; }
.g-left tbody tr:nth-child(even) td { border-bottom-width: 2px; height: 38px; }
.grid td.rn { padding: 0 0 0 6px; border-right: 0; border-bottom: 1px solid #f4f4f4; }
.g-left tbody tr:nth-child(even) td.rn { border-bottom-width: 1px; border-bottom-color: #f4f4f4; }
.rn.cur { font-weight: 700; }
.sel { background: #f0f0f0; }
.filt td { padding: 0 1px 0 0; vertical-align: top; }
.filt td.rn { vertical-align: middle; }
.filt input { display: block; width: 100%; height: 36px; padding: 0 0 2px 3px; border: 1px solid #767676; border-top: 0; background: #fff; font: inherit; outline: 0; }
.filt input::placeholder, .f::placeholder { color: #7d7d7d; opacity: 1; }
.vbar { width: 22px; height: 687px; flex: none; padding-left: 2px; background: #f0f0f0; display: flex; flex-direction: column; align-items: center; }
.vbar svg { margin: 9px 0 5px; flex: none; }
.vbar i { width: 19px; height: 609px; flex: none; background: #cdcdcd; margin-bottom: 42px; }
.vbar svg:last-child { margin: 0; }
.g-right { width: 483px; }
.g-right th:nth-child(1), .g-right th:nth-child(6) { width: 70px; }
.g-right th:nth-child(2), .g-right th:nth-child(5), .g-right th:nth-child(7) { width: 68px; }
.g-right th:nth-child(3), .g-right th:nth-child(4) { width: 69px; }
.g-right td { height: 37px; padding-left: 3px; }
.ctrls { display: flex; margin-top: 10px; height: 27px; }
.ctrls button { width: 92px; height: 27px; margin-left: 9px; padding: 0; background: #e1e1e1; border: 1px solid #adadad; font: inherit; color: #000; }
.ctrls button:nth-of-type(3) { margin-left: 10px; margin-right: 8px; }
.ctrls .b-x { width: 94px; margin-left: 10px; }
.f { height: 25px; margin-top: 1px; padding: 0 3px; background: #fff; border: 1px solid #767676; font: inherit; color: #000; outline: 0; }
.f-search { width: 231px; }
.f-qty { width: 229px; }

/* netdisk floating widget */
.baidu { position: absolute; left: 1750px; top: 77px; width: 162px; height: 47px; display: flex; align-items: stretch; background: #eef8ff; border: 1px solid #0a9cff; border-radius: 8px; overflow: hidden; z-index: 20; }
.bd-ic { width: 46px; flex: none; display: flex; align-items: center; justify-content: center; background: linear-gradient(90deg, #1c9bff, #0a8cff); border-radius: 7px; }
.bd-tx { margin-left: 7px; align-self: center; color: #0a9cff; font: 700 16px "Noto Sans CJK SC", sans-serif; white-space: nowrap; }
```
